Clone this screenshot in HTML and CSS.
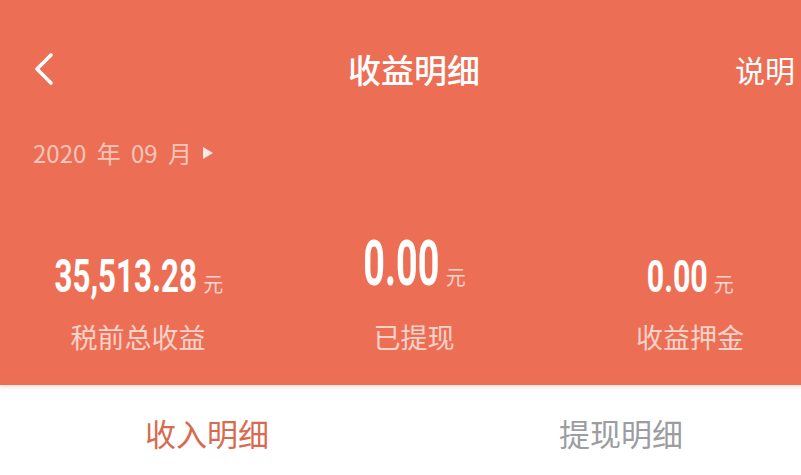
FILE: index.html
```html
<!DOCTYPE html>
<html lang="zh-CN">
<head>
<meta charset="utf-8">
<title>收益明细</title>
<link rel="stylesheet" href="styles.css">
</head>
<body>
<div class="page">
  <section class="hero">
    <header class="topbar">
      <span class="back">
        <svg width="24" height="34" viewBox="0 0 24 34"><path d="M18 3 L4 17 L18 31" fill="none" stroke="#fff" stroke-width="3.6" stroke-linecap="round" stroke-linejoin="round"/></svg>
      </span>
      <h1 class="title">收益明细</h1>
      <span class="help">说明</span>
    </header>
    <div class="date">2020 年 09 月<span class="tri"></span></div>
    <div class="stats">
      <div class="stat">
        <div class="amount"><span class="num num-side">35,513.28</span><span class="unit">元</span></div>
        <div class="label">税前总收益</div>
      </div>
      <div class="stat stat-main">
        <div class="amount"><span class="num num-main">0.00</span><span class="unit">元</span></div>
        <div class="label">已提现</div>
      </div>
      <div class="stat stat-right">
        <div class="amount"><span class="num num-small">0.00</span><span class="unit">元</span></div>
        <div class="label">收益押金</div>
      </div>
    </div>
  </section>
  <nav class="tabs">
    <span class="tab active">收入明细</span>
    <span class="tab">提现明细</span>
  </nav>
</div>
</body>
</html>
```

FILE: styles.css
```css
html, body {
  margin: 0;
  padding: 0;
  overflow: hidden;
  background: #fff;
}
body {
  font-family: "Noto Sans CJK SC", "Noto Sans", sans-serif;
}
.page {
  width: 828px;
}
.hero {
  background: #ec6f55;
  height: 385px;
  box-shadow: 0 2px 4px rgba(200, 120, 100, 0.25);
}
.topbar {
  height: 138px;
  padding: 0 33px 0 33px;
  box-sizing: border-box;
  display: grid;
  grid-template-columns: 1fr auto 1fr;
  align-items: center;
}
.back {
  display: flex;
  align-items: center;
}
.title {
  margin: 0;
  font-size: 33px;
  font-weight: 500;
  color: #fff;
  line-height: 40px;
}
.help {
  justify-self: end;
  font-size: 30px;
  color: #fff;
  line-height: 40px;
}
.date {
  padding-left: 33px;
  height: 30px;
  font-size: 24px;
  line-height: 30px;
  word-spacing: 5px;
  color: rgba(255, 255, 255, 0.6);
  display: flex;
  align-items: center;
}
.tri {
  display: inline-block;
  width: 0;
  height: 0;
  margin-left: 11px;
  border-left: 10px solid rgba(255, 255, 255, 0.85);
  border-top: 6px solid transparent;
  border-bottom: 6px solid transparent;
}
.stats {
  display: grid;
  grid-template-columns: repeat(3, 1fr);
  margin-top: 85px;
}
.stat {
  display: flex;
  flex-direction: column;
  align-items: center;
}
.amount {
  height: 62px;
  box-sizing: border-box;
  display: flex;
  align-items: baseline;
  justify-content: center;
}
.num {
  display: inline-block;
  font-family: Roboto, "Liberation Sans", sans-serif;
  font-weight: 700;
  color: #fff;
  line-height: 1;
}
.num-side {
  font-size: 46px;
  transform: scaleX(0.68);
  margin: 0 -32px;
}
.num-main {
  font-size: 63px;
  transform: scaleX(0.6);
  margin: 0 -24px;
}
.num-small {
  font-size: 44px;
  transform: scaleX(0.69);
  margin: 0 -13px;
}
.unit {
  margin-left: 5px;
  font-size: 20px;
  color: rgba(255, 255, 255, 0.72);
}
.stat-main .amount {
  margin-top: -21px;
  height: 83px;
}
.stat-right .amount {
  padding-top: 2px;
}
.label {
  margin-top: 6px;
  font-size: 27px;
  line-height: 32px;
  color: rgba(255, 255, 255, 0.7);
}
.tabs {
  display: grid;
  grid-template-columns: 1fr 1fr;
  justify-items: center;
  padding-top: 28px;
}
.tab {
  font-size: 31px;
  line-height: 40px;
  color: #9c9da2;
}
.tab.active {
  color: #d96a50;
}
```
